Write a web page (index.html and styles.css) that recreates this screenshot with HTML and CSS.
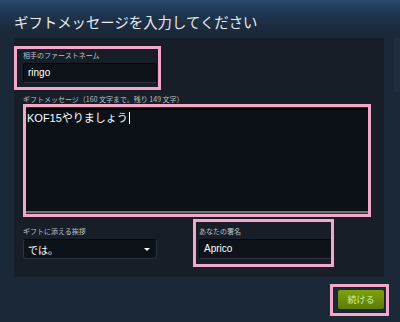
FILE: index.html
```html
<!DOCTYPE html>
<html lang="ja">
<head>
    <meta charset="UTF-8">
    <meta name="viewport" content="width=device-width, initial-scale=1.0">
    <link rel="stylesheet" href="styles.css">
</head>
<body>
    <div class="page">
        <div class="main">
            <h1 class="title">ギフトメッセージを入力してください</h1>

            <div class="panel">
                <div class="mark mark-name">
                    <label class="field-label" for="firstName">相手のファーストネーム</label>
                    <div class="text-input" id="firstName">ringo</div>
                </div>

                <div class="field-label msg-label">ギフトメッセージ（160 文字まで。残り 149 文字）</div>
                <div class="mark mark-msg">
                    <div class="message">KOF15やりましょう<span class="caret"></span></div>
                </div>

                <div class="bottom-row">
                    <div class="greeting">
                        <div class="field-label">ギフトに添える挨拶</div>
                        <div class="select-box">
                            <span>では。</span>
                            <span class="arrow"></span>
                        </div>
                    </div>
                    <div class="mark mark-sign">
                        <div class="field-label">あなたの署名</div>
                        <div class="text-input sign-input">Aprico</div>
                    </div>
                </div>
            </div>

            <div class="actions">
                <div class="mark mark-btn">
                    <button type="button" class="btn-continue">続ける</button>
                </div>
            </div>
        </div>
        <div class="side"></div>
    </div>
</body>
</html>
```

FILE: styles.css
```css
body {
    margin: 0;
    width: 400px;
    height: 322px;
    overflow: hidden;
    background: linear-gradient(to bottom, #25496d 0px, #1f354f 14px, #1b2838 32px, #1b2838 100%);
    font-family: "Noto Sans CJK JP", "Liberation Sans", sans-serif;
    color: #c6d4df;
}
.page {
    display: flex;
}
.main {
    width: 394px;
}
.side {
    width: 6px;
    height: 54px;
    margin-top: 38px;
    background: #1f2d3e;
}
.title {
    margin: 0;
    height: 38px;
    padding: 14px 0 0 14px;
    box-sizing: border-box;
    font-size: 14.4px;
    line-height: 16px;
    font-weight: normal;
    color: #e6ebef;
}
.panel {
    margin-left: 14px;
    width: 370px;
    height: 239px;
    padding-top: 8px;
    box-sizing: border-box;
    background: #171e28;
}
.mark {
    border: 3px solid #f2a8c8;
    box-sizing: border-box;
}
.field-label {
    display: block;
    font-size: 7px;
    line-height: 12px;
    height: 12px;
    color: #b7c1cb;
    white-space: nowrap;
}
.text-input {
    height: 20px;
    box-sizing: border-box;
    margin-top: 2px;
    padding-left: 4px;
    background: #0e131a;
    border: 1px solid #05080b;
    border-bottom-color: #2b3441;
    border-radius: 2px;
    font-family: "Liberation Sans", "Noto Sans CJK JP", sans-serif;
    font-size: 10px;
    line-height: 18px;
    color: #ffffff;
}
.mark-name {
    width: 147px;
    height: 44px;
    padding-left: 6px;
}
.mark-name .text-input {
    width: 134px;
}
.msg-label {
    margin: 5px 0 0 9px;
    height: 9px;
    line-height: 9px;
}
.mark-msg {
    margin-left: 9px;
    width: 348px;
    height: 113px;
    padding: 1px 0;
    background: #252d37;
}
.message {
    height: 100%;
    box-sizing: border-box;
    padding: 1px 1px 0;
    background: #0c1118;
    border-top: 2px solid #000000;
    border-bottom: 2px solid #6e737a;
    font-family: "Liberation Sans", "Noto Sans CJK JP", sans-serif;
    font-size: 11px;
    line-height: 14px;
    color: #ffffff;
}
.caret {
    display: inline-block;
    width: 1px;
    height: 12px;
    margin-left: 1px;
    vertical-align: -2px;
    background: #ffffff;
}
.bottom-row {
    display: flex;
    align-items: flex-start;
    margin-top: 2px;
}
.greeting {
    margin-left: 9px;
    width: 134px;
    padding-top: 6px;
}
.select-box {
    display: flex;
    justify-content: space-between;
    align-items: center;
    height: 20px;
    box-sizing: border-box;
    margin-top: 2px;
    padding: 0 6px 0 4px;
    background: #0d1218;
    border: 1px solid #2a323d;
    border-top-color: #06090c;
    border-radius: 3px;
    font-size: 10px;
    color: #ffffff;
}
.arrow {
    width: 0;
    height: 0;
    border-left: 3px solid transparent;
    border-right: 3px solid transparent;
    border-top: 3px solid #ffffff;
}
.mark-sign {
    margin-left: 36px;
    width: 141px;
    height: 48px;
    padding: 3px 0 0 3px;
    overflow: hidden;
}
.sign-input {
    width: 140px;
}
.actions {
    display: flex;
    justify-content: flex-end;
    margin-top: 7px;
    padding-right: 5px;
}
.mark-btn {
    width: 59px;
    height: 32px;
    padding: 3px 0 0 5px;
}
.btn-continue {
    display: block;
    width: 46px;
    height: 19px;
    padding: 0;
    border: none;
    border-radius: 2px;
    background: linear-gradient(to bottom, #7ea20c 0%, #5c7a08 100%);
    font-family: "Noto Sans CJK JP", sans-serif;
    font-size: 9px;
    line-height: 19px;
    color: #d2efa9;
}
```
